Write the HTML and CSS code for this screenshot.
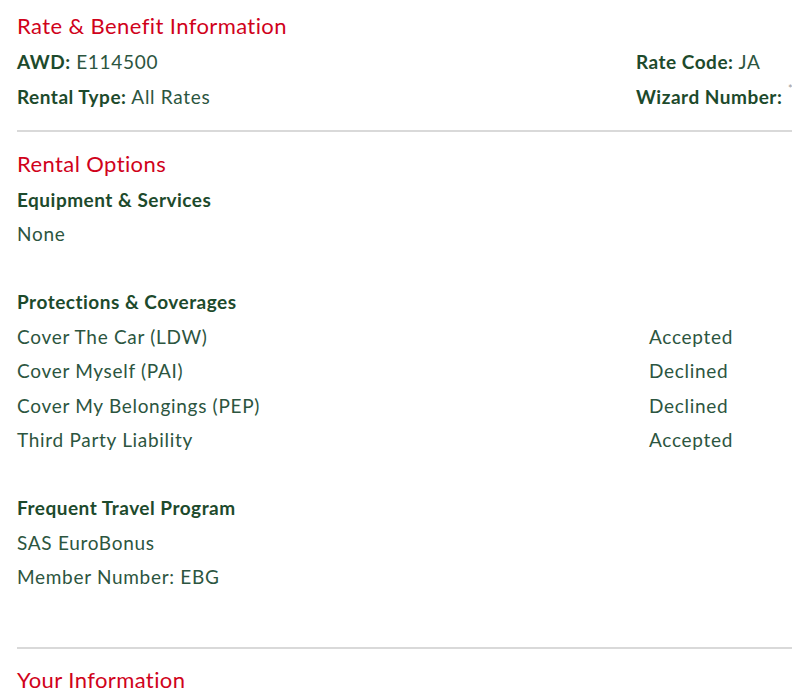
FILE: index.html
```html
<!DOCTYPE html>
<html lang="en">
<head>
<meta charset="utf-8">
<title>Rate &amp; Benefit Information</title>
<link rel="stylesheet" href="styles.css">
</head>
<body>
<div class="page">
  <section class="section first">
    <h2 class="title">Rate &amp; Benefit Information</h2>
    <div class="info-grid">
      <div class="row"><b>AWD:</b> E114500</div>
      <div class="row"><b>Rate Code:</b> JA</div>
      <div class="row"><b>Rental Type:</b> All Rates</div>
      <div class="row"><b>Wizard Number:</b> <span class="star">*</span></div>
    </div>
  </section>
  <hr class="divider">
  <section class="section">
    <h2 class="title">Rental Options</h2>
    <div class="group">
      <h3 class="sub">Equipment &amp; Services</h3>
      <div class="row">None</div>
    </div>
    <div class="group">
      <h3 class="sub">Protections &amp; Coverages</h3>
      <div class="cov-grid">
        <div class="row">Cover The Car (LDW)</div><div class="row">Accepted</div>
        <div class="row">Cover Myself (PAI)</div><div class="row">Declined</div>
        <div class="row">Cover My Belongings (PEP)</div><div class="row">Declined</div>
        <div class="row">Third Party Liability</div><div class="row">Accepted</div>
      </div>
    </div>
    <div class="group">
      <h3 class="sub">Frequent Travel Program</h3>
      <div class="row">SAS EuroBonus</div>
      <div class="row">Member Number: EBG</div>
    </div>
  </section>
  <hr class="divider second">
  <section class="section">
    <h2 class="title">Your Information</h2>
  </section>
</div>
</body>
</html>
```
FILE: styles.css
```css
html, body {
  margin: 0;
  padding: 0;
  background: #fff;
  overflow: hidden;
}
body {
  font-family: "Lato", "Open Sans", sans-serif;
  color: #2c5540;
}
.page {
  padding-left: 17px;
  width: 900px;
}
.section { margin: 0; }
.title {
  margin: 0;
  font-size: 22px;
  font-weight: 400;
  letter-spacing: 0.4px;
  color: #d0021b;
  line-height: 39px;
  height: 39px;
  padding-top: 11.5px;
}
.first .title { padding-top: 6px; }
.info-grid {
  display: grid;
  grid-template-columns: 619px auto;
}
.row {
  font-size: 19px;
  letter-spacing: 0.7px;
  line-height: 34.5px;
  height: 34.5px;
  white-space: nowrap;
}
.row b {
  font-weight: 700;
  letter-spacing: 0.5px;
  color: #1d4a2c;
}
.star {
  font-size: 11px;
  color: #999;
  vertical-align: top;
  position: relative;
  top: -8px;
}
.divider {
  border: 0;
  border-top: 2px solid #d9d9d9;
  margin: 16px 0 0 0;
  width: 775px;
}
.divider.second { margin-top: 52px; }
.group { margin-bottom: 33.5px; }
.group:last-child { margin-bottom: 0; }
.sub {
  margin: 0;
  font-size: 19px;
  font-weight: 700;
  letter-spacing: 0.5px;
  color: #1d4a2c;
  line-height: 34.5px;
  height: 34.5px;
}
.cov-grid {
  display: grid;
  grid-template-columns: 632px auto;
}
```
